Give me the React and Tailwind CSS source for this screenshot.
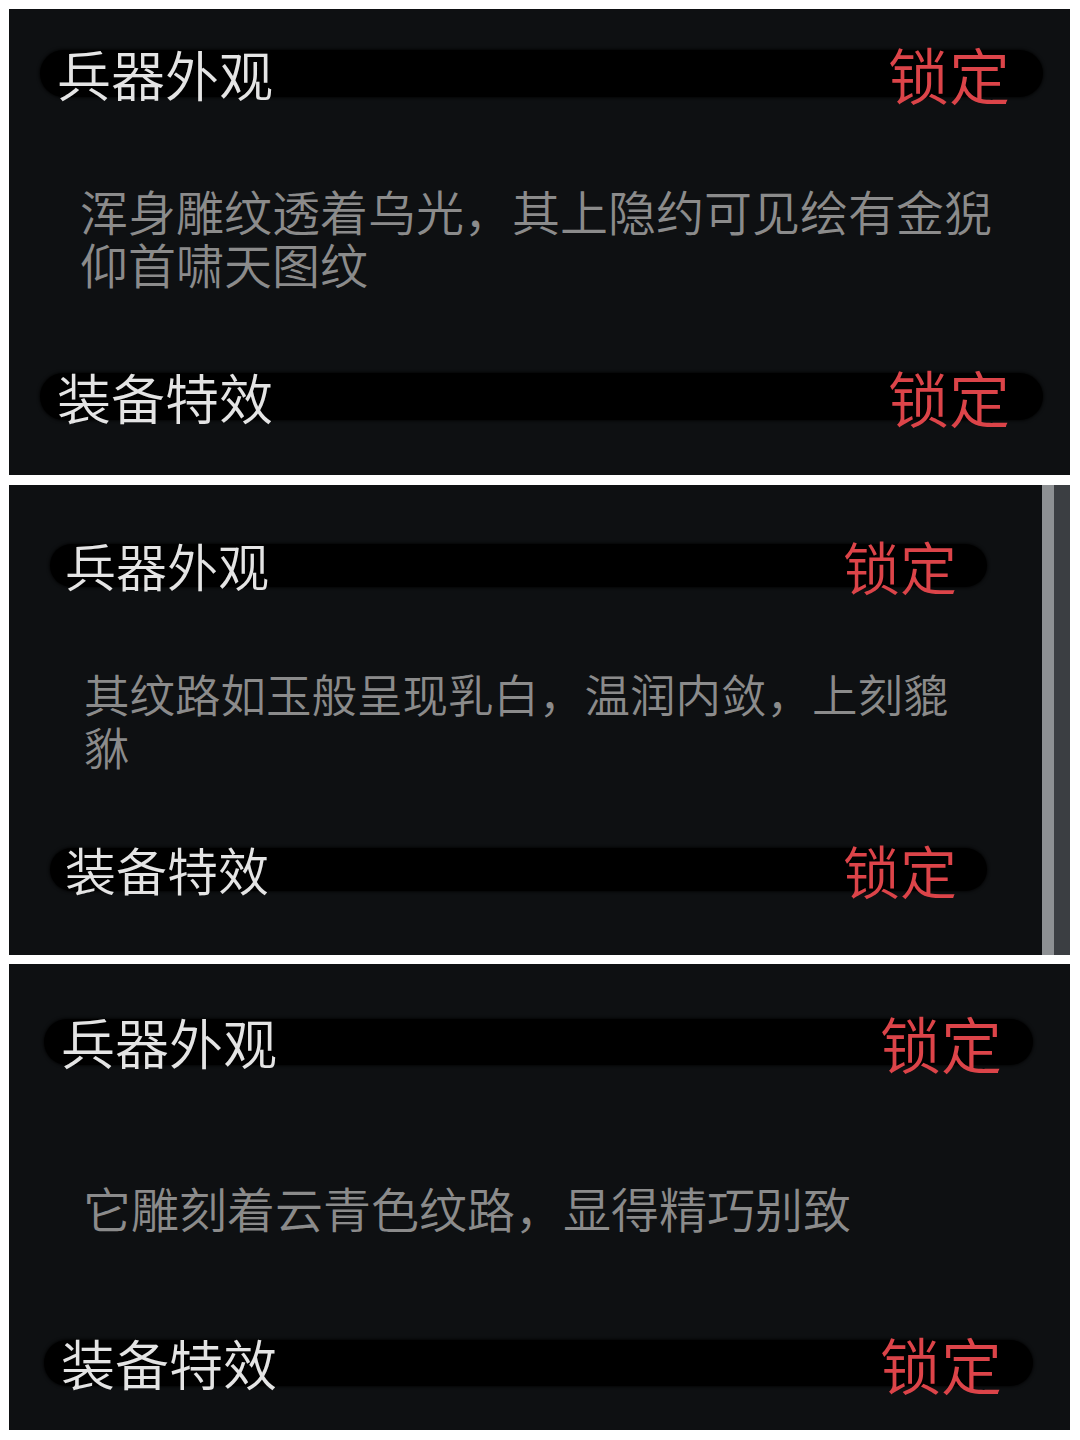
const FONT = "font-['Noto_Sans_CJK_SC','Noto_Sans',sans-serif]";

function SectionBar({ title, className, titleClass, lockClass }) {
    return (
        <div className={`flex items-center justify-between rounded-full bg-black shadow-[0_0_3px_1px_rgba(0,0,0,0.7)] ${className}`}>
            <span className={`whitespace-nowrap font-[350] leading-none text-[#e4e4e4] ${titleClass}`}>{title}</span>
            <span className={`whitespace-nowrap font-[350] leading-none text-[#dc4449] ${lockClass}`}>锁定</span>
        </div>
    );
}

const panels = [
    {
        key: 'black',
        panel: 'h-[466px] pt-[41px]',
        bar: 'h-[47px] ml-[31px] mr-[27px] pl-[17px] pr-[33px]',
        title: 'text-[54px]',
        lock: 'text-[61px]',
        desc: '浑身雕纹透着乌光，其上隐约可见绘有金猊仰首啸天图纹',
        descClass: 'mt-[87px] pl-[71px] pr-[55px] text-[48px] leading-[53px]',
        bar2Gap: 'mt-[83px]',
    },
    {
        key: 'white',
        panel: 'h-[470px] pt-[59px]',
        bar: 'h-[43px] ml-[41px] mr-[55px] pl-[15px] pr-[30px]',
        title: 'text-[51px]',
        lock: 'text-[57px]',
        desc: '其纹路如玉般呈现乳白，温润内敛，上刻貔貅',
        descClass: 'mt-[80px] pl-[75px] pr-[72px] text-[45.5px] leading-[53px]',
        bar2Gap: 'mt-[75px]',
        scroll: true,
    },
    {
        key: 'cyan',
        panel: 'h-[466px] pt-[55px]',
        bar: 'h-[46px] ml-[35px] mr-[37px] pl-[17px] pr-[31px]',
        title: 'text-[54px]',
        lock: 'text-[61px]',
        desc: '它雕刻着云青色纹路，显得精巧别致',
        descClass: 'mt-[116px] pl-[74px] pr-[60px] text-[48px] leading-[53px]',
        bar2Gap: 'mt-[106px]',
    },
];

function WeaponPanel({ p }) {
    return (
        <div className={`flex bg-[#0e1012] ${p.panel.split(' ')[0]}`}>
            <div className={`flex min-w-0 flex-1 flex-col ${p.panel.split(' ')[1]}`}>
                <SectionBar title="兵器外观" className={p.bar} titleClass={p.title} lockClass={p.lock} />
                <p className={`font-[350] text-[#8b8b8b] ${p.descClass}`}>{p.desc}</p>
                <div className={p.bar2Gap}>
                    <SectionBar title="装备特效" className={p.bar} titleClass={p.title} lockClass={p.lock} />
                </div>
            </div>
            {p.scroll && (
                <div className="flex w-[28px] shrink-0">
                    <div className="w-[12px] bg-[#8d9093]" />
                    <div className="flex-1 bg-[#3b3e42]" />
                </div>
            )}
        </div>
    );
}

export default function App() {
    return (
        <div className={`flex h-[1440px] w-[1080px] flex-col bg-white pt-[9px] pl-[9px] pr-[10px] ${FONT}`}>
            <WeaponPanel p={panels[0]} />
            <div className="h-[10px] shrink-0" />
            <WeaponPanel p={panels[1]} />
            <div className="h-[9px] shrink-0" />
            <WeaponPanel p={panels[2]} />
        </div>
    );
}
